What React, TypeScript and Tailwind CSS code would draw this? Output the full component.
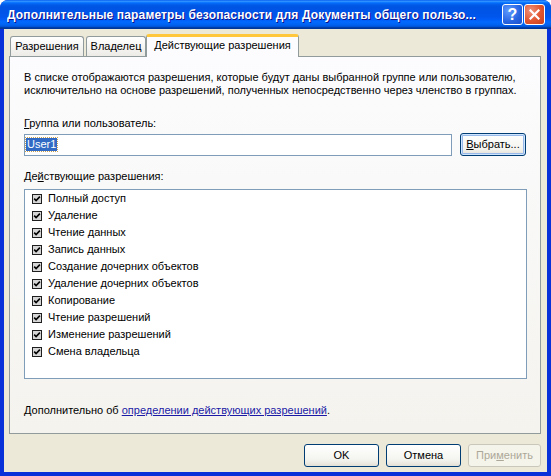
import React from 'react';

const permissions = [
  'Полный доступ',
  'Удаление',
  'Чтение данных',
  'Запись данных',
  'Создание дочерних объектов',
  'Удаление дочерних объектов',
  'Копирование',
  'Чтение разрешений',
  'Изменение разрешений',
  'Смена владельца',
];

// Small grey XP-style checked box
const CheckMark: React.FC = () => (
  <svg width="10" height="10" viewBox="0 0 10 10" className="shrink-0">
    <rect x="0.5" y="0.5" width="9" height="9" fill="#d6d6d6" stroke="#1e1e1e" />
    <path d="M2.2 4.6 L4.1 6.6 L7.9 2.6" fill="none" stroke="#000" strokeWidth="1.6" />
  </svg>
);

interface BtnProps {
  children: React.ReactNode;
  focused?: boolean;
  disabled?: boolean;
  width?: string;
}

const XpButton: React.FC<BtnProps> = ({ children, focused, disabled, width = 'w-[75px]' }) => {
  if (disabled) {
    return (
      <div className={`${width} h-[23px] rounded-[3px] border border-[#c9c7ba] bg-[#f5f4ea] text-[#aca899] flex items-center justify-center`}>
        {children}
      </div>
    );
  }
  return (
    <div
      className={`${width} h-[23px] rounded-[3px] border border-[#003c74] bg-[linear-gradient(to_bottom,#ffffff_0%,#f4f4ef_70%,#e3e0d6_100%)] flex items-center justify-center ${
        focused ? 'shadow-[inset_0_0_0_1px_#cee7ff,inset_0_0_0_2px_#98b8ea]' : ''
      }`}
    >
      {children}
    </div>
  );
};

const App: React.FC = () => {
  return (
    <div className="w-[551px] h-[476px] bg-white text-[11px] text-black [font-family:'Liberation_Sans',Arial,sans-serif]">
      <div className="w-full h-full flex flex-col rounded-t-[8px] overflow-hidden bg-[#0831d9]">
        {/* Title bar */}
        <div className="h-[29px] shrink-0 flex items-center pl-[7px] pr-[6px] bg-[linear-gradient(to_bottom,#0058ee_0%,#3593ff_4%,#288eff_6%,#127dff_8%,#036ffc_10%,#0262ee_14%,#0057e5_20%,#0054e3_24%,#0055eb_56%,#005bf5_66%,#026afe_76%,#0062ef_86%,#0052d6_92%,#0040ab_94%,#003092_100%)]">
          <div className="flex-1 min-w-0 overflow-hidden text-white font-bold text-[12px] tracking-[0.15px] whitespace-nowrap [text-shadow:1px_1px_0_#0f1089] pt-[1px]">
            Дополнительные параметры безопасности для Документы общего пользо...
          </div>
          <div className="flex items-center gap-[1px] shrink-0">
            <div className="w-[21px] h-[21px] rounded-[3px] border border-white bg-[radial-gradient(circle_at_30%_30%,#5f9bff_0%,#2763e0_60%,#1a4fcd_100%)] flex items-center justify-center text-white font-bold text-[16px] leading-none">
              ?
            </div>
            <div className="w-[21px] h-[21px] rounded-[3px] border border-white bg-[radial-gradient(circle_at_30%_30%,#f0917a_0%,#e1552e_55%,#c6401e_100%)] flex items-center justify-center">
              <svg width="11" height="11" viewBox="0 0 11 11">
                <path d="M1.5 1.5 L9.5 9.5 M9.5 1.5 L1.5 9.5" stroke="#fff" strokeWidth="2.2" strokeLinecap="square" />
              </svg>
            </div>
          </div>
        </div>

        {/* Body */}
        <div className="flex-1 mx-[4px] mb-[4px] bg-[#ece9d8] flex flex-col pl-[5px] pr-[6px]">
          {/* Tabs */}
          <div className="h-[27px] flex items-end pl-[1px] pt-[5px]">
            <div className="w-[74px] h-[20px] rounded-t-[3px] border border-b-0 border-[#919b9c] bg-[linear-gradient(to_bottom,#ffffff,#ecebe6)] flex items-center justify-center">
              Разрешения
            </div>
            <div className="w-[60px] h-[20px] ml-[2px] rounded-t-[3px] border border-b-0 border-[#919b9c] bg-[linear-gradient(to_bottom,#ffffff,#ecebe6)] flex items-center justify-center">
              Владелец
            </div>
            <div className="w-[153px] h-[23px] -mb-[1px] relative z-10 rounded-t-[3px] border-x border-[#919b9c] border-t-[3px] border-t-[#ffc83c] bg-[#fcfcfe] flex items-center justify-center pb-[3px]">
              Действующие разрешения
            </div>
          </div>

          {/* Tab page */}
          <div className="h-[378px] border border-[#919b9c] bg-[linear-gradient(to_bottom,#fcfcfe,#f4f3ee)] flex flex-col pl-[14px] pr-[12px] pt-[14px]">
            <p className="leading-[13px]">
              В списке отображаются разрешения, которые будут даны выбранной группе или пользователю,
              <br />
              исключительно на основе разрешений, полученных непосредственно через членство в группах.
            </p>

            <div className="mt-[20px] leading-[13px]">
              <span className="underline">Г</span>руппа или пользователь:
            </div>
            <div className="mt-[3px] flex items-center">
              <div className="w-[428px] h-[22px] border border-[#7f9db9] bg-white flex items-center pl-[1px]">
                <span className="bg-[#316ac5] text-white px-[1px] leading-[13px] outline outline-1 outline-dotted outline-[#c8a050]">
                  User1
                </span>
              </div>
              <div className="ml-[8px]">
                <XpButton focused width="w-[66px]">
                  <span>
                    <span className="underline">В</span>ыбрать...
                  </span>
                </XpButton>
              </div>
            </div>

            <div className="mt-[14px] leading-[13px]">
              Де<span className="underline">й</span>ствующие разрешения:
            </div>
            <div className="mt-[6px] w-[503px] h-[190px] border border-[#7f9db9] bg-white pl-[7px]">
              {permissions.map((p) => (
                <div key={p} className="h-[17px] flex items-center gap-[6px]">
                  <CheckMark />
                  <span>{p}</span>
                </div>
              ))}
            </div>

            <div className="mt-[25px] leading-[13px]">
              Дополнительно об{' '}
              <span className="text-[#1a1aa6] underline">определении действующих разрешений</span>.
            </div>
          </div>

          {/* Buttons */}
          <div className="mt-[10px] flex justify-end gap-[7px]">
            <XpButton>OK</XpButton>
            <XpButton>Отмена</XpButton>
            <XpButton disabled width="w-[73px]">
              <span>
                При<span className="underline">м</span>енить
              </span>
            </XpButton>
          </div>
        </div>
      </div>
    </div>
  );
};

export default App;
